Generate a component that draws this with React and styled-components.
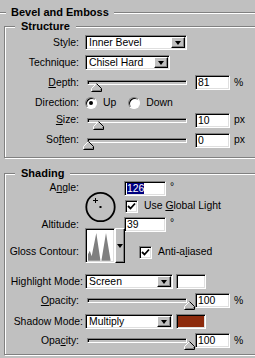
import React from 'react';
import styled, { createGlobalStyle } from 'styled-components';

const GlobalStyle = createGlobalStyle`
  body {
    margin: 0;
    background: #c0c0c0;
  }
`;

const Page = styled.div`
  width: 255px;
  height: 358px;
  overflow: hidden;
  background: #c0c0c0;
  font-family: "Liberation Sans", Arial, sans-serif;
  font-size: 10.4px;
  color: #000;
`;

const TitleRow = styled.div`
  display: flex;
  align-items: flex-start;
  height: 19px;
`;

const EtchLine = styled.div`
  flex: ${p => (p.$w ? `0 0 ${p.$w}px` : '1')};
  margin-top: 12px;
  border-top: 1px solid #808080;
  border-bottom: 1px solid #fff;
`;

const TitleText = styled.div`
  font-size: 11px;
  font-weight: bold;
  line-height: 14px;
  margin: 5px 5px 0;
  white-space: nowrap;
`;

const Group = styled.fieldset`
  margin: ${p => p.$mt || 0}px -20px 0 4px;
  padding: 0 0 ${p => p.$pb}px 0;
  min-width: 0;
  border: 1px solid #808080;
  box-shadow: inset 1px 1px 0 #fff, 1px 1px 0 #fff;
`;

const Legend = styled.legend`
  margin-left: 10px;
  padding: 0 6px;
  font-size: 11px;
  font-weight: bold;
  line-height: 14px;
  background: #c0c0c0;
`;

const Row = styled.div`
  display: flex;
  align-items: ${p => p.$align || 'center'};
  height: ${p => p.$h}px;
  margin-top: ${p => p.$mt || 0}px;
`;

const Label = styled.span`
  flex: 0 0 80px;
  box-sizing: border-box;
  padding-right: ${p => (p.$pr === undefined ? 6 : p.$pr)}px;
  margin-bottom: ${p => p.$mb || 0}px;
  text-align: right;
  white-space: nowrap;
  line-height: 14px;
`;

const sunken = `
  box-sizing: border-box;
  border: 1px solid;
  border-color: #808080 #fff #fff #808080;
  box-shadow: inset 1px 1px 0 #000, inset -1px -1px 0 #dfdfdf;
`;

const raised = `
  box-sizing: border-box;
  background: #c0c0c0;
  border: 1px solid;
  border-color: #fff #000 #000 #fff;
  box-shadow: inset -1px -1px 0 #808080;
`;

const Select = styled.div`
  ${sunken}
  width: ${p => p.$w}px;
  height: 15px;
  padding: 1px 1px 1px 3px;
  background: #fff;
  display: flex;
  align-items: center;
  justify-content: space-between;
  line-height: 12px;
`;

const DropButton = styled.span`
  ${raised}
  width: ${p => p.$w || 14}px;
  height: ${p => p.$h || 11}px;
  display: flex;
  align-items: center;
  justify-content: center;

  &::after {
    content: '';
    width: 0;
    height: 0;
    border-left: 3px solid transparent;
    border-right: 3px solid transparent;
    border-top: 4px solid #000;
  }
`;

const Field = styled.div`
  ${sunken}
  width: ${p => p.$w || 35}px;
  height: 15px;
  margin-left: ${p => p.$ml || 0}px;
  padding: 1px 0 0 2px;
  background: #fff;
  line-height: 12px;
`;

const Selected = styled.span`
  background: #000080;
  color: #fff;
`;

const Unit = styled.span`
  margin-left: 4px;
  align-self: ${p => (p.$top ? 'flex-start' : 'auto')};
  line-height: 12px;
`;

const SliderWrap = styled.div`
  position: relative;
  width: 102px;
  height: 15px;
`;

const Track = styled.div`
  box-sizing: border-box;
  width: 100px;
  height: 5px;
  margin: 5px 0 0 2px;
  border: 1px solid;
  border-color: #808080 #fff #fff #808080;
  box-shadow: inset 1px 1px 0 #000;
  background: #c0c0c0;
`;

const Thumb = styled.svg`
  position: absolute;
  top: 8px;
`;

const Swatch = styled.div`
  ${sunken}
  width: 30px;
  height: 15px;
  margin-left: 3px;
  background: ${p => p.$color};
`;

const Radio = styled.span`
  box-sizing: border-box;
  width: 12px;
  height: 12px;
  border-radius: 50%;
  background: #fff;
  border: 1px solid;
  border-color: #808080 #fff #fff #808080;
  box-shadow: inset 1px 1px 0 #000;
  display: flex;
  align-items: center;
  justify-content: center;

  &::after {
    content: '';
    width: 4px;
    height: 4px;
    border-radius: 50%;
    background: ${p => (p.$on ? '#000' : 'transparent')};
  }
`;

const Choice = styled.span`
  display: flex;
  align-items: center;
  gap: ${p => p.$gap || 6}px;
  margin-left: ${p => p.$ml || 0}px;
  margin-bottom: ${p => p.$mb || 0}px;
  white-space: nowrap;
  line-height: 14px;
`;

const CheckBox = styled.span`
  ${sunken}
  width: 13px;
  height: 13px;
  background: #fff;
  display: flex;
  align-items: center;
  justify-content: center;
`;

const AngleGrid = styled.div`
  display: grid;
  grid-template-columns: 80px 39px 1fr;
  grid-template-rows: 16px 20px 17px;
  align-items: center;
`;

const DialCell = styled.div`
  grid-column: 2;
  grid-row: 1 / 4;
  display: flex;
  align-items: center;
`;

const Cell = styled.div`
  grid-column: ${p => p.$col};
  grid-row: ${p => p.$row};
  display: flex;
  align-items: center;
`;

const Contour = styled.div`
  ${sunken}
  width: 30px;
  height: 35px;
  padding: 2px;
  background: #fff;
  display: flex;
`;

const Check = () => (
  <CheckBox>
    <svg width="9" height="9" viewBox="0 0 9 9">
      <path d="M1 4 L3.5 6.5 L8 1.5" fill="none" stroke="#000" strokeWidth="1.8" />
    </svg>
  </CheckBox>
);

const Slider = ({ x }) => (
  <SliderWrap>
    <Track />
    <Thumb width="11" height="9" viewBox="0 0 11 9" style={{ left: x }}>
      <polygon points="5.5,0.5 10.5,5.5 10.5,8.5 0.5,8.5 0.5,5.5" fill="#c0c0c0" />
      <polyline points="0.5,8 0.5,5.5 5.5,0.5" fill="none" stroke="#fff" />
      <polyline points="5.5,0.5 10.5,5.5 10.5,8.5 0.5,8.5" fill="none" stroke="#000" />
      <polyline points="9.5,6 9.5,7.5 1.5,7.5" fill="none" stroke="#808080" />
    </Thumb>
  </SliderWrap>
);

const Dial = () => (
  <svg width="32" height="32" viewBox="0 0 32 32">
    <circle cx="15.5" cy="16" r="14.2" fill="none" stroke="#000" strokeWidth="1.8" />
    <path d="M10.5 7 V12 M8 9.5 H13" stroke="#000" strokeWidth="1" />
    <rect x="14.5" y="15" width="2" height="2" fill="#000" />
  </svg>
);

export default function App() {
  return (
    <Page>
      <GlobalStyle />
      <TitleRow>
        <EtchLine $w={6} />
        <TitleText>Bevel and Emboss</TitleText>
        <EtchLine />
      </TitleRow>

      <Group $pb={4}>
        <Legend>Structure</Legend>
        <Row $h={19}>
          <Label>Style:</Label>
          <Select $w={102}>
            Inner Bevel
            <DropButton />
          </Select>
        </Row>
        <Row $h={21}>
          <Label>Technique:</Label>
          <Select $w={85}>
            Chisel Hard
            <DropButton />
          </Select>
        </Row>
        <Row $h={19}>
          <Label><u>D</u>epth:</Label>
          <Slider x={6} />
          <Field $ml={8}>81</Field>
          <Unit>%</Unit>
        </Row>
        <Row $h={21}>
          <Label>Direction:</Label>
          <Choice>
            <Radio $on />
            <span>Up</span>
          </Choice>
          <Choice $ml={12}>
            <Radio />
            <span>Down</span>
          </Choice>
        </Row>
        <Row $h={14}>
          <Label><u>S</u>ize:</Label>
          <Slider x={8} />
          <Field $ml={8}>10</Field>
          <Unit>px</Unit>
        </Row>
        <Row $h={26}>
          <Label>So<u>f</u>ten:</Label>
          <Slider x={-2} />
          <Field $ml={8}>0</Field>
          <Unit>px</Unit>
        </Row>
      </Group>

      <Group $mt={8} $pb={6}>
        <Legend>Shading</Legend>
        <AngleGrid>
          <Cell $col={1} $row={1}>
            <Label>A<u>n</u>gle:</Label>
          </Cell>
          <DialCell>
            <Dial />
          </DialCell>
          <Cell $col={3} $row={1}>
            <Field $w={42}><Selected>126</Selected></Field>
            <Unit $top>°</Unit>
          </Cell>
          <Cell $col={3} $row={2}>
            <Choice $ml={1}>
              <Check />
              <span>Use <u>G</u>lobal Light</span>
            </Choice>
          </Cell>
          <Cell $col={1} $row={3}>
            <Label>Altitude:</Label>
          </Cell>
          <Cell $col={3} $row={3}>
            <Field $w={42}>39</Field>
            <Unit $top>°</Unit>
          </Cell>
        </AngleGrid>

        <Row $h={35} $mt={-5} $align="flex-end">
          <Label $mb={4}>Gloss Contour:</Label>
          <Contour>
            <svg width="26" height="31" viewBox="0 0 26 31">
              <polygon
                points="0,31 0,24 2,20 4,26 9,1 13.5,31 14.5,31 19.5,1 24.5,31"
                fill="#808080"
              />
            </svg>
          </Contour>
          <DropButton $w={10} $h={35} />
          <Choice $ml={14} $mb={4}>
            <Check />
            <span>Anti-a<u>l</u>iased</span>
          </Choice>
        </Row>

        <Row $h={19} $mt={9}>
          <Label $pr={2}>Highlight Mode:</Label>
          <Select $w={88}>
            Screen
            <DropButton />
          </Select>
          <Swatch $color="#fff" />
        </Row>
        <Row $h={19}>
          <Label><u>O</u>pacity:</Label>
          <Slider x={99} />
          <Field $ml={8}>100</Field>
          <Unit>%</Unit>
        </Row>
        <Row $h={23}>
          <Label $pr={2}>Shadow Mode:</Label>
          <Select $w={88}>
            Multiply
            <DropButton />
          </Select>
          <Swatch $color="#8c2a0c" />
        </Row>
        <Row $h={15}>
          <Label>Opa<u>c</u>ity:</Label>
          <Slider x={99} />
          <Field $ml={8}>100</Field>
          <Unit>%</Unit>
        </Row>
      </Group>
    </Page>
  );
}
